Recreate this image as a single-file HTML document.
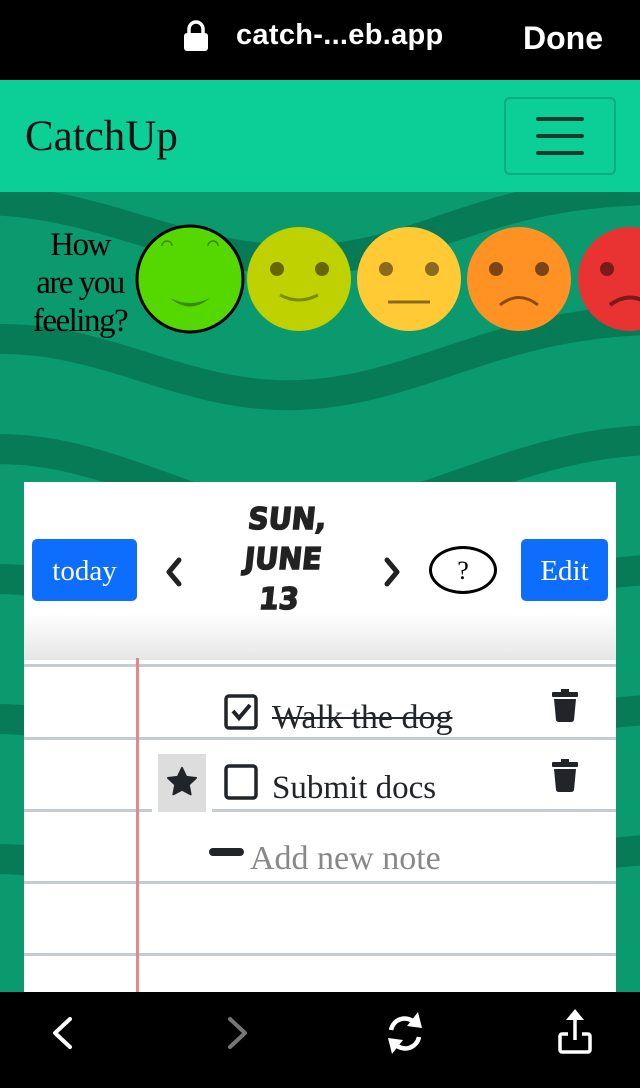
<!DOCTYPE html>
<html><head><meta charset="utf-8"><style>
*{margin:0;padding:0;box-sizing:border-box}
body{width:640px;height:1088px;position:relative;overflow:hidden;background:#0a9a6e;font-family:"Liberation Serif",serif}
.abs{position:absolute}
</style></head><body>
<svg class="abs" style="left:0;top:192px" width="640" height="800" viewBox="0 192 640 800">
<rect x="0" y="192" width="640" height="800" fill="#0a9a6e"/>
<g fill="none" stroke="#077a56" stroke-width="30">
<path d="M-20 200 C100 200 180 260 300 260 C420 260 480 190 660 190"/>
<path d="M-20 340 C100 330 180 400 300 395 C420 390 500 320 660 320"/>
<path d="M-20 450 C100 440 200 520 300 520 C420 520 520 440 660 440"/>
<path d="M-20 580 C100 570 200 650 300 650 C420 650 520 570 660 570"/>
<path d="M-20 720 C100 710 200 790 300 790 C420 790 520 710 660 710"/>
<path d="M-20 860 C100 850 200 930 300 930 C420 930 520 850 660 850"/>
</g>
</svg>
<div class="abs" style="left:0;top:0;width:640px;height:80px;background:#000;color:#fff;font-family:'Liberation Sans',sans-serif;font-weight:bold">
<svg class="abs" style="left:182px;top:20px" width="28" height="32"><rect x="2" y="13" width="24" height="18" rx="3" fill="#fff"/><path d="M7 14V9a7 7 0 0 1 14 0v5" stroke="#fff" stroke-width="3.5" fill="none"/></svg>
<div class="abs" style="left:236px;top:19px;font-size:29px;letter-spacing:0.3px">catch-...eb.app</div>
<div class="abs" style="left:523px;top:20px;font-size:32px">Done</div>
</div>
<div class="abs" style="left:0;top:80px;width:640px;height:112px;background:#0ccf97">
<div class="abs" style="left:25px;top:32px;font-size:43px;color:#111">CatchUp</div>
<div class="abs" style="left:504px;top:17px;width:112px;height:78px;border:2px solid #0aad7f;border-radius:6px"></div>
<div class="abs" style="left:536px;top:37px;width:48px;height:4px;background:#1a3a30;border-radius:2px"></div>
<div class="abs" style="left:536px;top:54px;width:48px;height:4px;background:#1a3a30;border-radius:2px"></div>
<div class="abs" style="left:536px;top:71px;width:48px;height:4px;background:#1a3a30;border-radius:2px"></div>
</div>
<div class="abs" style="left:20px;top:226px;width:120px;text-align:center;font-size:33px;line-height:38px;color:#000;letter-spacing:-1.5px">How<br>are you<br>feeling?</div>
<svg class="abs" style="left:130px;top:220px" width="510" height="120">
<ellipse cx="60" cy="59" rx="53" ry="53" fill="#55d700" stroke="#000" stroke-width="3"/>
<path d="M32 26a5 5 0 0 1 10 0M78 26a5 5 0 0 1 10 0" stroke="#3a8a00" stroke-width="1.5" fill="none"/>
<path d="M40 78 Q60 95 80 78 Q60 88 40 78Z" fill="#3a8a00"/>
<ellipse cx="169" cy="59" rx="52" ry="52" fill="#bfd100"/>
<circle cx="147" cy="49" r="7" fill="#666600"/><circle cx="192" cy="49" r="7" fill="#666600"/>
<path d="M150 75 Q169 85 188 75" stroke="#7a8a00" stroke-width="3" fill="none"/>
<ellipse cx="279" cy="59" rx="52" ry="52" fill="#ffca33"/>
<circle cx="256" cy="49" r="7" fill="#8a6a20"/><circle cx="302" cy="49" r="7" fill="#8a6a20"/>
<path d="M258 82 L300 82" stroke="#8a6a20" stroke-width="3"/>
<ellipse cx="389" cy="59" rx="52" ry="52" fill="#ff9222"/>
<circle cx="366" cy="49" r="7" fill="#7a4414"/><circle cx="412" cy="49" r="7" fill="#7a4414"/>
<path d="M370 85 Q389 70 408 85" stroke="#8a4a14" stroke-width="3" fill="none"/>
<ellipse cx="500" cy="59" rx="52" ry="52" fill="#e93333"/>
<circle cx="477" cy="49" r="7" fill="#7a1a1a"/>
<path d="M480 85 Q500 70 520 85" stroke="#7a1a1a" stroke-width="4" fill="none"/>
</svg>
<div class="abs" style="left:24px;top:482px;width:592px;height:510px;background:#fff;overflow:hidden">
<div class="abs" style="left:0;top:130px;width:592px;height:48px;background:linear-gradient(#fff,#e6e6e6)"></div>
<div class="abs" style="left:8px;top:57px;width:105px;height:62px;background:#0d6efd;border-radius:5px;color:#fff;font-size:29px;text-align:center;line-height:64px">today</div>
<svg class="abs" style="left:138px;top:72px" width="24" height="36"><path d="M17 6 L7 18 L17 30" stroke="#222" stroke-width="5" fill="none" stroke-linecap="round" stroke-linejoin="round"/></svg>
<svg class="abs" style="left:356px;top:72px" width="24" height="36"><path d="M7 6 L17 18 L7 30" stroke="#222" stroke-width="5" fill="none" stroke-linecap="round" stroke-linejoin="round"/></svg>
<div class="abs" style="left:180px;top:18px;width:158px;text-align:center;font-family:'DejaVu Sans',sans-serif;font-weight:bold;font-size:30px;line-height:40px;color:#222;text-transform:uppercase;letter-spacing:0px;transform:skewX(-6deg) scaleX(0.95);-webkit-text-stroke:1.5px #222">Sun,<br>June<br>13</div>
<div class="abs" style="left:405px;top:64px;width:68px;height:48px;border:3px solid #000;border-radius:50%;text-align:center;font-size:26px;line-height:44px">?</div>
<div class="abs" style="left:497px;top:57px;width:87px;height:62px;background:#0d6efd;border-radius:5px;color:#fff;font-size:29px;text-align:center;line-height:64px">Edit</div>
<div class="abs" style="left:0;top:182px;width:592px;height:3px;background:#c4ccd2"></div>
<div class="abs" style="left:0;top:255px;width:592px;height:3px;background:#c4ccd2"></div>
<div class="abs" style="left:0;top:327px;width:128px;height:3px;background:#c4ccd2"></div>
<div class="abs" style="left:188px;top:327px;width:404px;height:3px;background:#c4ccd2"></div>
<div class="abs" style="left:0;top:399px;width:592px;height:3px;background:#c4ccd2"></div>
<div class="abs" style="left:0;top:471px;width:592px;height:3px;background:#c4ccd2"></div>
<div class="abs" style="left:112px;top:176px;width:3px;height:340px;background:#e08a8a"></div>
<div class="abs" style="left:134px;top:272px;width:48px;height:58px;background:#ddd"></div>
<svg class="abs" style="left:140px;top:282px" width="36" height="36" viewBox="0 0 24 24"><path d="M12 2.5l2.9 6 6.5.8-4.8 4.5 1.2 6.5L12 17.2l-5.8 3.1 1.2-6.5L2.6 9.3l6.5-.8z" fill="#212529" stroke="#212529" stroke-width="1.2" stroke-linejoin="round"/></svg>
<svg class="abs" style="left:200px;top:212px" width="36" height="36"><rect x="2" y="2" width="30" height="32" rx="3" fill="none" stroke="#212529" stroke-width="3.5"/><path d="M9 17 L15 24 L26 11" stroke="#212529" stroke-width="4" fill="none"/></svg>
<div class="abs" style="left:248px;top:217px;font-size:34px;color:#212529;text-decoration:line-through;text-decoration-thickness:2px">Walk the dog</div>
<svg class="abs" style="left:200px;top:282px" width="36" height="36"><rect x="2" y="2" width="30" height="32" rx="3" fill="none" stroke="#212529" stroke-width="3.5"/></svg>
<div class="abs" style="left:248px;top:288px;font-size:33px;color:#212529">Submit docs</div>
<svg class="abs" style="left:526px;top:206px" width="32" height="36"><rect x="2" y="4" width="26" height="5" rx="1" fill="#212529"/><rect x="11" y="1" width="8" height="4" fill="#212529"/><path d="M4 11h22l-2 21a3 3 0 0 1-3 2H9a3 3 0 0 1-3-2z" fill="#212529"/></svg>
<svg class="abs" style="left:526px;top:276px" width="32" height="36"><rect x="2" y="4" width="26" height="5" rx="1" fill="#212529"/><rect x="11" y="1" width="8" height="4" fill="#212529"/><path d="M4 11h22l-2 21a3 3 0 0 1-3 2H9a3 3 0 0 1-3-2z" fill="#212529"/></svg>
<div class="abs" style="left:185px;top:366px;width:35px;height:8px;border-radius:4px;background:#212529"></div>
<div class="abs" style="left:226px;top:358px;font-size:34px;color:#888">Add new note</div>
</div>
<div class="abs" style="left:0;top:992px;width:640px;height:96px;background:#000">
<svg class="abs" style="left:0;top:0" width="640" height="96">
<path d="M70 27 L55 41 L70 55" stroke="#fff" stroke-width="4" fill="none" stroke-linecap="round" stroke-linejoin="round"/>
<path d="M230 27 L245 41 L230 55" stroke="#777" stroke-width="4" fill="none" stroke-linecap="round" stroke-linejoin="round"/>
<path d="M391 38 A14 14 0 0 1 414 30" stroke="#fff" stroke-width="4.5" fill="none"/>
<path d="M418 20 L422 36 L407 34 Z" fill="#fff"/>
<path d="M419 45 A14 14 0 0 1 396 53" stroke="#fff" stroke-width="4.5" fill="none"/>
<path d="M392 62 L388 46 L403 48 Z" fill="#fff"/>
<path d="M568 42 H562 a2 2 0 0 0-2 2 V58 a2 2 0 0 0 2 2 H588 a2 2 0 0 0 2-2 V44 a2 2 0 0 0-2-2 H582" stroke="#fff" stroke-width="3.5" fill="none"/>
<path d="M575 48 V24" stroke="#fff" stroke-width="3.5"/>
<path d="M566 28 L575 17 L584 28 Z" fill="#fff"/>
</svg>
</div>
</body></html>
